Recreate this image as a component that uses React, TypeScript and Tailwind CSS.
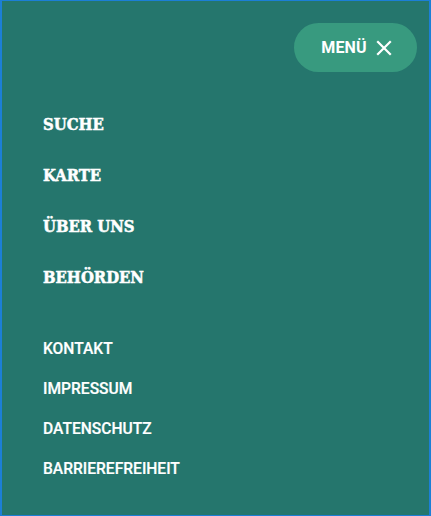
import React from "react";

export default function App() {
  const main = ["SUCHE", "KARTE", "ÜBER UNS", "BEHÖRDEN"];
  const sub = ["KONTAKT", "IMPRESSUM", "DATENSCHUTZ", "BARRIEREFREIHEIT"];
  return (
    <div className="w-[431px] h-[516px] bg-[#25766d] border-x-2 border-y border-[#1c7fd6] relative" style={{ fontFamily: "Roboto, 'Liberation Sans', sans-serif" }}>
      <div className="flex justify-end pt-[22px] pr-[12px]">
        <button className="h-[49px] w-[123px] rounded-full bg-[#389a7f] flex items-center justify-center gap-[9px] pl-[2px] text-white">
          <span className="text-[16px] font-bold tracking-[0.2px]">MENÜ</span>
          <svg width="16" height="16" viewBox="0 0 16 16" fill="none" stroke="white" strokeWidth="2.2" strokeLinecap="square">
            <path d="M2 2L14 14M14 2L2 14" />
          </svg>
        </button>
      </div>
      <nav className="pl-[41px] pt-[42px]">
        <ul className="flex flex-col gap-[29px]">
          {main.map((m) => (
            <li key={m} className="text-white text-[16.5px] font-bold leading-[22px] [-webkit-text-stroke:0.5px_white]" style={{ fontFamily: "'DejaVu Serif Condensed', 'DejaVu Serif', serif", fontStretch: "condensed" }}>{m}</li>
          ))}
        </ul>
        <ul className="flex flex-col gap-[20px] mt-[50px]">
          {sub.map((m) => (
            <li key={m} className="text-white text-[15.6px] font-medium leading-[20px] [-webkit-text-stroke:0.2px_white]">{m}</li>
          ))}
        </ul>
      </nav>
    </div>
  );
}
